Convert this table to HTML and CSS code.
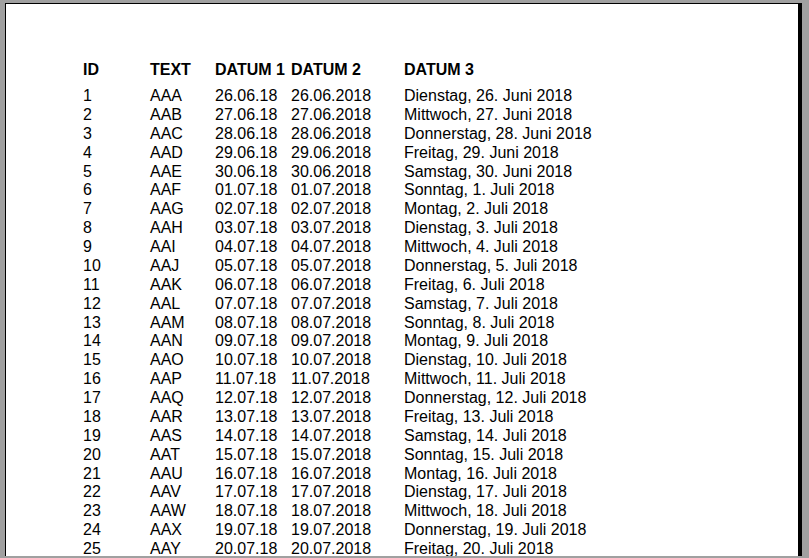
FILE: index.html
```html
<!DOCTYPE html>
<html lang="de">
<head>
<meta charset="utf-8">
<title>Druckvorschau</title>
<link rel="stylesheet" href="styles.css">
</head>
<body>
<div class="viewport">
  <div class="page">
    <div class="row head"><span>ID</span><span>TEXT</span><span>DATUM 1</span><span>DATUM 2</span><span>DATUM 3</span></div>
    <div class="rows">
      <div class="row"><span>1</span><span>AAA</span><span>26.06.18</span><span>26.06.2018</span><span>Dienstag, 26. Juni 2018</span></div>
      <div class="row"><span>2</span><span>AAB</span><span>27.06.18</span><span>27.06.2018</span><span>Mittwoch, 27. Juni 2018</span></div>
      <div class="row"><span>3</span><span>AAC</span><span>28.06.18</span><span>28.06.2018</span><span>Donnerstag, 28. Juni 2018</span></div>
      <div class="row"><span>4</span><span>AAD</span><span>29.06.18</span><span>29.06.2018</span><span>Freitag, 29. Juni 2018</span></div>
      <div class="row"><span>5</span><span>AAE</span><span>30.06.18</span><span>30.06.2018</span><span>Samstag, 30. Juni 2018</span></div>
      <div class="row"><span>6</span><span>AAF</span><span>01.07.18</span><span>01.07.2018</span><span>Sonntag, 1. Juli 2018</span></div>
      <div class="row"><span>7</span><span>AAG</span><span>02.07.18</span><span>02.07.2018</span><span>Montag, 2. Juli 2018</span></div>
      <div class="row"><span>8</span><span>AAH</span><span>03.07.18</span><span>03.07.2018</span><span>Dienstag, 3. Juli 2018</span></div>
      <div class="row"><span>9</span><span>AAI</span><span>04.07.18</span><span>04.07.2018</span><span>Mittwoch, 4. Juli 2018</span></div>
      <div class="row"><span>10</span><span>AAJ</span><span>05.07.18</span><span>05.07.2018</span><span>Donnerstag, 5. Juli 2018</span></div>
      <div class="row"><span>11</span><span>AAK</span><span>06.07.18</span><span>06.07.2018</span><span>Freitag, 6. Juli 2018</span></div>
      <div class="row"><span>12</span><span>AAL</span><span>07.07.18</span><span>07.07.2018</span><span>Samstag, 7. Juli 2018</span></div>
      <div class="row"><span>13</span><span>AAM</span><span>08.07.18</span><span>08.07.2018</span><span>Sonntag, 8. Juli 2018</span></div>
      <div class="row"><span>14</span><span>AAN</span><span>09.07.18</span><span>09.07.2018</span><span>Montag, 9. Juli 2018</span></div>
      <div class="row"><span>15</span><span>AAO</span><span>10.07.18</span><span>10.07.2018</span><span>Dienstag, 10. Juli 2018</span></div>
      <div class="row"><span>16</span><span>AAP</span><span>11.07.18</span><span>11.07.2018</span><span>Mittwoch, 11. Juli 2018</span></div>
      <div class="row"><span>17</span><span>AAQ</span><span>12.07.18</span><span>12.07.2018</span><span>Donnerstag, 12. Juli 2018</span></div>
      <div class="row"><span>18</span><span>AAR</span><span>13.07.18</span><span>13.07.2018</span><span>Freitag, 13. Juli 2018</span></div>
      <div class="row"><span>19</span><span>AAS</span><span>14.07.18</span><span>14.07.2018</span><span>Samstag, 14. Juli 2018</span></div>
      <div class="row"><span>20</span><span>AAT</span><span>15.07.18</span><span>15.07.2018</span><span>Sonntag, 15. Juli 2018</span></div>
      <div class="row"><span>21</span><span>AAU</span><span>16.07.18</span><span>16.07.2018</span><span>Montag, 16. Juli 2018</span></div>
      <div class="row"><span>22</span><span>AAV</span><span>17.07.18</span><span>17.07.2018</span><span>Dienstag, 17. Juli 2018</span></div>
      <div class="row"><span>23</span><span>AAW</span><span>18.07.18</span><span>18.07.2018</span><span>Mittwoch, 18. Juli 2018</span></div>
      <div class="row"><span>24</span><span>AAX</span><span>19.07.18</span><span>19.07.2018</span><span>Donnerstag, 19. Juli 2018</span></div>
      <div class="row"><span>25</span><span>AAY</span><span>20.07.18</span><span>20.07.2018</span><span>Freitag, 20. Juli 2018</span></div>
    </div>
  </div>
</div>
</body>
</html>
```
FILE: styles.css
```css
html, body {
  margin: 0;
  padding: 0;
  background: #a0a0a0;
  height: 558px;
  overflow: hidden;
}
.viewport {
  height: 556px;
  overflow: hidden;
  padding: 3px 0 0 5px;
  box-sizing: border-box;
}
.page {
  width: 794px;
  height: 700px;
  background: #fff;
  border-left: 1px solid #000;
  border-top: 1px solid #000;
  border-right: 1px solid #000;
  box-shadow: 3px 0 0 #000;
  padding: 56px 0 0 77px;
  box-sizing: border-box;
  font-family: "Liberation Sans", Arial, sans-serif;
  font-size: 16px;
  color: #000;
}
.row {
  display: grid;
  grid-template-columns: 67px 65px 76px 113px auto;
  line-height: 18.875px;
  white-space: nowrap;
}
.head {
  font-weight: bold;
  height: 19px;
  margin-bottom: 8px;
  line-height: 19px;
}
```
